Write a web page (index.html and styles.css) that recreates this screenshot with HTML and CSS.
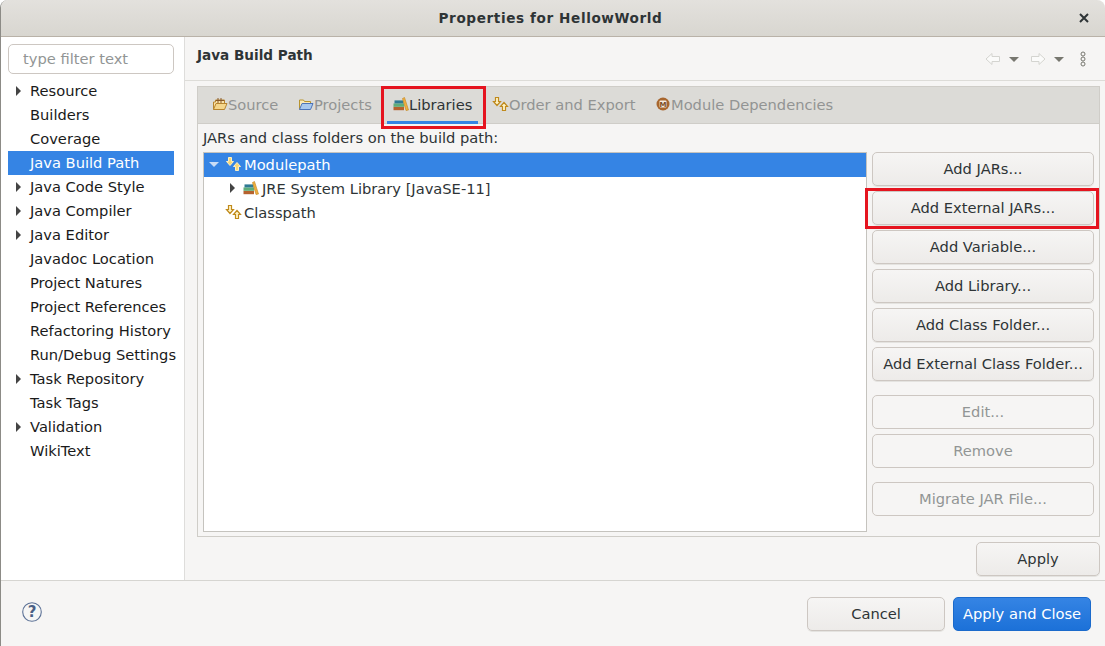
FILE: index.html
```html
<!DOCTYPE html>
<html lang="en">
<head>
<meta charset="utf-8">
<title>Properties for HellowWorld</title>
<link rel="stylesheet" href="styles.css">
</head>
<body>
<svg class="defs" width="0" height="0" aria-hidden="true">
  <defs>
    <symbol id="i-lib" viewBox="0 0 16 16">
      <rect x="0.500" y="10.800" width="10.500" height="3.400" fill="#b5622e"/>
      <rect x="0.500" y="7.400" width="10.500" height="3.400" fill="#5fae7a"/>
      <rect x="1.500" y="4.400" width="9" height="3" fill="#2f7a94"/>
      <path d="M9.500 2.500 L11.500 1.500 L15.500 14 L13 14.500 Z" fill="#f0b040" stroke="#c08420" stroke-width=".6"/>
    </symbol>
    <symbol id="i-path" viewBox="0 0 18 16">
      <path d="M3.500 1.500h3v4h2l-3.500 4-3.500-4h2z" fill="#fff4c8" stroke="#c08a1c" stroke-width="1.200"/>
      <path d="M12 6.500l3.500 4h-2v4h-3v-4h-2z" fill="#fff4c8" stroke="#c08a1c" stroke-width="1.200"/>
    </symbol>
    <symbol id="i-path-on" viewBox="0 0 18 16">
      <path d="M3.500 1.500h3v4h2l-3.500 4-3.500-4h2z" fill="#f8d878" stroke="#fff0c0" stroke-width="1"/>
      <path d="M12 6.500l3.500 4h-2v4h-3v-4h-2z" fill="#f8d878" stroke="#fff0c0" stroke-width="1"/>
    </symbol>
  </defs>
</svg>
<div class="window">
  <header class="titlebar">
    <span class="title">Properties for HellowWorld</span>
    <svg class="close" width="10" height="10" viewBox="0 0 10 10"><path d="M1 1l8 8M9 1l-8 8" stroke="#2e3436" stroke-width="2"/></svg>
  </header>
  <div class="content">
    <aside class="sidebar">
      <input class="filter" type="text" placeholder="type filter text">
      <ul class="nav">
        <li class="nav-item arrow">Resource</li>
        <li class="nav-item">Builders</li>
        <li class="nav-item">Coverage</li>
        <li class="nav-item selected">Java Build Path</li>
        <li class="nav-item arrow">Java Code Style</li>
        <li class="nav-item arrow">Java Compiler</li>
        <li class="nav-item arrow">Java Editor</li>
        <li class="nav-item">Javadoc Location</li>
        <li class="nav-item">Project Natures</li>
        <li class="nav-item">Project References</li>
        <li class="nav-item">Refactoring History</li>
        <li class="nav-item">Run/Debug Settings</li>
        <li class="nav-item arrow">Task Repository</li>
        <li class="nav-item">Task Tags</li>
        <li class="nav-item arrow">Validation</li>
        <li class="nav-item">WikiText</li>
      </ul>
    </aside>
    <main class="page">
      <div class="page-head">
        <h1 class="page-title">Java Build Path</h1>
        <div class="page-tools">
          <svg class="tool" width="16" height="14" viewBox="0 0 16 14"><path d="M1 7l6-5.500v3h7.500v5H7v3z" fill="#fbfbfa" stroke="#d4d4d0"/></svg>
          <span class="caret"></span>
          <svg class="tool" width="16" height="14" viewBox="0 0 16 14"><path d="M15 7L9 1.500v3H1.500v5H9v3z" fill="#fbfbfa" stroke="#d4d4d0"/></svg>
          <span class="caret"></span>
          <svg class="tool-menu" width="6" height="16" viewBox="0 0 6 16"><g fill="none" stroke="#77776f"><circle cx="3" cy="3" r="2"/><circle cx="3" cy="8" r="2"/><circle cx="3" cy="13" r="2"/></g></svg>
        </div>
      </div>
      <section class="folder">
        <nav class="tabs">
          <span class="tab tab-source">
            <svg width="16" height="16" viewBox="0 0 16 16"><path d="M1.500 13.500V6h2V4h9v3" fill="#fbe3a8" stroke="#b8842e"/><path d="M6 2v5M9 2v5M4 4.500h8" stroke="#8a5a2a" fill="none"/><path d="M1.500 13.500l2.500-6h11l-2.500 6z" fill="#f5d68c" stroke="#b8842e"/></svg>Source
          </span>
          <span class="tab tab-projects">
            <svg width="16" height="16" viewBox="0 0 16 16"><path d="M1.500 13.500V4h4l1 1.500h6V7" fill="#fbe9b8" stroke="#b8942e"/><path d="M1.500 13.500l2.500-6h11l-2.500 6z" fill="#a9c8ee" stroke="#4d74b8"/></svg>Projects
          </span>
          <span class="tab tab-active">
            <svg width="16" height="16"><use href="#i-lib"/></svg>Libraries
          </span>
          <span class="tab tab-order">
            <svg class="order-icon" width="18" height="16"><use href="#i-path"/></svg>Order and Export
          </span>
          <span class="tab tab-module">
            <svg class="module-icon" width="14" height="14" viewBox="0 0 14 14"><circle cx="7" cy="7" r="6.500" fill="#a8662e"/><rect x="3.500" y="3.500" width="7" height="7" rx="1" fill="#f4ece0"/><text x="7" y="9.500" class="module-m">M</text></svg>Module Dependencies
          </span>
        </nav>
        <div class="folder-body">
          <p class="folder-label">JARs and class folders on the build path:</p>
          <div class="folder-row">
            <div class="tree">
              <div class="tree-row tree-selected">
                <span class="twist twist-open"></span>
                <svg class="tree-icon" width="18" height="16"><use href="#i-path-on"/></svg>
                <span>Modulepath</span>
              </div>
              <div class="tree-row tree-child">
                <span class="twist twist-closed"></span>
                <svg class="tree-icon-lib" width="16" height="16"><use href="#i-lib"/></svg>
                <span>JRE System Library [JavaSE-11]</span>
              </div>
              <div class="tree-row">
                <span class="twist"></span>
                <svg class="tree-icon" width="18" height="16"><use href="#i-path"/></svg>
                <span>Classpath</span>
              </div>
            </div>
            <div class="actions">
              <button class="btn" type="button">Add JARs...</button>
              <button class="btn" type="button">Add External JARs...</button>
              <button class="btn" type="button">Add Variable...</button>
              <button class="btn" type="button">Add Library...</button>
              <button class="btn" type="button">Add Class Folder...</button>
              <button class="btn" type="button">Add External Class Folder...</button>
              <button class="btn btn-off gap-before" type="button">Edit...</button>
              <button class="btn btn-off" type="button">Remove</button>
              <button class="btn btn-off gap-before" type="button">Migrate JAR File...</button>
            </div>
          </div>
        </div>
      </section>
      <div class="apply-row">
        <button class="btn btn-apply" type="button">Apply</button>
      </div>
    </main>
  </div>
  <footer class="footer">
    <svg class="help" width="20" height="20" viewBox="0 0 20 20"><circle cx="10" cy="10" r="9.300" fill="#f6f6f5" stroke="#5c7196" stroke-width="1.100"/><text x="10" y="15" class="help-q">?</text></svg>
    <div class="footer-actions">
      <button class="btn btn-cancel" type="button">Cancel</button>
      <button class="btn btn-primary" type="button">Apply and Close</button>
    </div>
  </footer>
  <div class="mark mark-tab"></div>
  <div class="mark mark-btn"></div>
</div>
</body>
</html>
```
FILE: styles.css
```css
* { box-sizing: border-box; }
html, body { margin: 0; height: 100%; }
body {
  background: #fff;
  font-family: "DejaVu Sans", sans-serif;
  font-size: 14.67px;
  color: #2e3436;
  overflow: hidden;
}
.defs { position: absolute; }
.window {
  position: relative;
  width: 1105px;
  height: 646px;
  display: flex;
  flex-direction: column;
  background: #f6f5f4;
  border-left: 1px solid #8c8b86;
  border-radius: 8px 8px 0 0;
  overflow: hidden;
}
.titlebar {
  height: 37px;
  flex: none;
  display: flex;
  align-items: center;
  justify-content: center;
  position: relative;
  padding-right: 5px;
  background: linear-gradient(#e3e1dd, #d8d6d0);
  border-bottom: 1px solid #b9b2a8;
}
.title { font-weight: 700; font-size: 13.6px; color: #2e3436; letter-spacing: .6px; }
.close { position: absolute; right: 16px; top: 13px; }
.content { flex: none; height: 544px; display: flex; border-bottom: 1px solid #d6d5d1; }
.sidebar {
  width: 184px;
  flex: none;
  background: #fff;
  border-right: 1px solid #dedddb;
  padding: 7px 10px 0 7px;
}
.filter {
  display: block;
  width: 166px;
  height: 30px;
  border: 1px solid #cdc7c2;
  border-radius: 5px;
  padding: 0 14px 2px;
  font: inherit;
  background: #fff;
  outline: none;
}
.filter::placeholder { color: #929595; opacity: 1; }
.nav { list-style: none; margin: 5px 0 0; padding: 0; }
.nav-item {
  position: relative;
  height: 24px;
  line-height: 24px;
  padding-left: 22px;
  color: #1a1a1a;
  white-space: nowrap;
}
.nav-item.selected { background: #3584e4; color: #fff; width: 166px; }
.nav-item.arrow::before {
  content: "";
  position: absolute;
  left: 8px;
  top: 7px;
  border-left: 5px solid #444;
  border-top: 5px solid transparent;
  border-bottom: 5px solid transparent;
}
.page { flex: 1; min-width: 0; padding: 0 5px 0 12px; display: flex; flex-direction: column; }
.page-head {
  height: 44px;
  margin: 0 -5px 0 -12px;
  padding: 0 19px 0 12px;
  border-bottom: 1px solid #dddcd8;
  display: flex;
  align-items: center;
  justify-content: space-between;
  flex: none;
}
.page-title { margin: -7px 0 0; font-size: 13.6px; font-weight: 700; color: #2e3436; }
.page-tools { display: flex; align-items: center; margin-top: 1px; }
.tool { display: block; }
.caret {
  margin: 0 11px 0 8px;
  border-top: 5px solid #77776f;
  border-left: 5px solid transparent;
  border-right: 5px solid transparent;
}
.tool-menu { display: block; margin-left: 5px; }
.folder {
  margin-top: 5px;
  height: 451px;
  flex: none;
  border: 1px solid #cfcdc8;
  display: flex;
  flex-direction: column;
}
.tabs {
  height: 37px;
  flex: none;
  background: #dcdbd7;
  border-bottom: 1px solid #cfcdc8;
  display: flex;
  align-items: stretch;
  color: #929493;
  position: relative;
}
.tab { display: flex; align-items: center; white-space: nowrap; height: 36px; padding-bottom: 2px; }
.tab svg { flex: none; }
.tab-source { margin-left: 14px; width: 86px; }
.tab-projects { width: 88px; }
.tab-active {
  width: 91px;
  margin-left: 1px;
  color: #2e3436;
  position: relative;
  padding-left: 6px;
}
.tab-active::after {
  content: "";
  position: absolute;
  left: 0;
  right: 0;
  bottom: -1px;
  height: 3px;
  background: #3584e4;
}
.tab-order { margin-left: 14px; width: 164px; }
.order-icon { margin-right: -1px; }
.module-icon { margin-right: 1px; }
.module-m { font-size: 7px; font-weight: 700; text-anchor: middle; fill: #7a4a20; }
.folder-body { flex: 1; padding: 5px 5px 4px 5px; min-height: 0; display: flex; flex-direction: column; }
.folder-label { margin: 0; height: 23px; line-height: 18px; color: #2e3436; }
.folder-row { flex: 1; display: flex; min-height: 0; }
.tree {
  width: 664px;
  flex: none;
  background: #fff;
  border: 1px solid #c5c3be;
  align-self: stretch;
}
.tree-row { height: 24px; display: flex; align-items: center; padding: 0 0 2px 5px; color: #2e3436; white-space: nowrap; }
.tree-selected { background: #3584e4; color: #fff; }
.tree-child { padding-left: 22px; }
.twist { width: 16px; flex: none; display: block; }
.twist-open {
  width: 0;
  margin: 0 6px 0 0;
  border-top: 5px solid #c8dcf6;
  border-left: 5px solid transparent;
  border-right: 5px solid transparent;
}
.twist-closed {
  width: 0;
  margin: 0 8px 0 4px;
  border-left: 5px solid #444;
  border-top: 5px solid transparent;
  border-bottom: 5px solid transparent;
}
.tree-icon { margin-right: 1px; flex: none; }
.tree-icon-lib { margin-right: 3px; flex: none; }
.actions { width: 222px; margin-left: 5px; flex: none; display: flex; flex-direction: column; gap: 5px; }
.btn {
  height: 34px;
  flex: none;
  border: 1px solid #cdc7c2;
  border-radius: 5px;
  background: linear-gradient(#f6f5f4, #edebe9);
  font: inherit;
  color: #2e3436;
  padding: 0 0 2px;
  box-shadow: 0 1px 0 #e4e3e0;
}
.btn-off { background: #f6f5f4; color: #929595; box-shadow: none; }
.gap-before { margin-top: 9px; }
.apply-row { display: flex; justify-content: flex-end; margin-top: 5px; }
.btn-apply { width: 124px; }
.footer {
  flex: 1;
  display: flex;
  align-items: center;
  justify-content: space-between;
  padding: 0 14px 0 21px;
}
.help { display: block; margin-top: -3px; }
.help-q { font-size: 15px; font-weight: 700; text-anchor: middle; fill: #4b5f85; }
.footer-actions { display: flex; gap: 8px; margin-top: 1px; }
.btn-cancel { width: 138px; }
.btn-primary {
  width: 138px;
  border-color: #1b6acb;
  background: linear-gradient(#3584e4, #1c71d8);
  color: #fff;
  box-shadow: none;
}
.mark { position: absolute; border: 3px solid #e5141f; pointer-events: none; }
.mark-tab { left: 380px; top: 86px; width: 105px; height: 43px; }
.mark-btn { left: 864px; top: 188px; width: 234px; height: 41px; }
```
